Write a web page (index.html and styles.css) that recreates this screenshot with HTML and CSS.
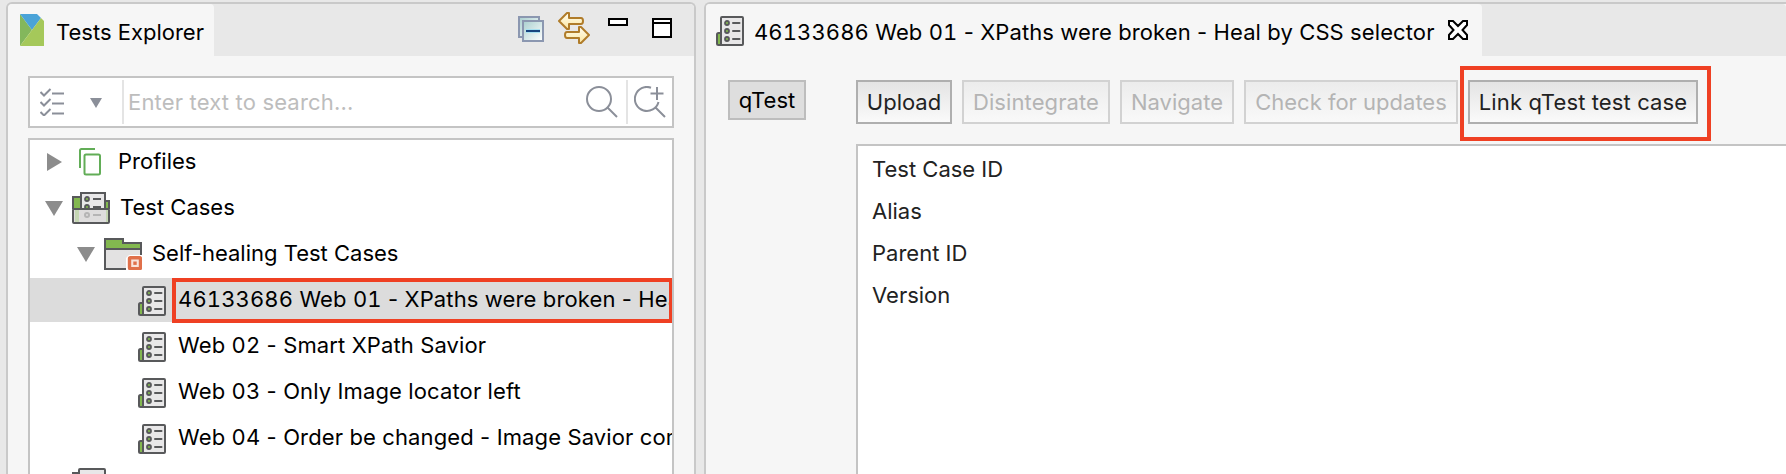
FILE: index.html
```
<!DOCTYPE html>
<html lang="en">
<head>
<meta charset="utf-8">
<title>Tests Explorer</title>
<link rel="stylesheet" href="styles.css">
</head>
<body>
<svg width="0" height="0" class="defs" aria-hidden="true">
  <defs>
    <linearGradient id="sheet" x1="0" y1="0" x2="1" y2="1"><stop offset="0" stop-color="#a9cfcf"/><stop offset="1" stop-color="#fff"/></linearGradient>
    <linearGradient id="gold" x1="0" y1="0" x2="0" y2="1"><stop offset="0" stop-color="#fffdf2"/><stop offset="1" stop-color="#fbe6a0"/></linearGradient>
    <symbol id="case" viewBox="0 0 28 30">
      <rect x="1" y="17" width="6" height="12" rx="1.5" fill="#83b84f" stroke="#58595b" stroke-width="2"/>
      <rect x="5" y="1" width="22" height="28" rx="1" fill="#e8e7e8" stroke="#58595b" stroke-width="2"/>
      <g fill="#83b84f" stroke="#58595b" stroke-width="1.8"><circle cx="11" cy="7" r="2"/><circle cx="11" cy="15" r="2"/><circle cx="11" cy="23" r="2"/></g>
      <path d="M17 7h6.5M17 15h6.5M17 23h6.5" stroke="#58595b" stroke-width="2" stroke-linecap="round"/>
    </symbol>
  </defs>
</svg>
<div class="workbench">
  <section class="view explorer">
    <header class="tabbar">
      <div class="tab explorer-tab">
        <svg class="logo" width="24" height="32" viewBox="0 0 24 32"><path d="M0 0L12 16L0 32z" fill="#83b75c"/><path d="M0 0H17L21 4L12 16z" fill="#4aa3d8"/><path d="M21 4L24 7V32H0z" fill="#a5c85a"/></svg>
        <span class="t">Tests Explorer</span>
      </div>
      <div class="tools">
        <svg width="26" height="26" viewBox="0 0 26 26"><rect x="1" y="1" width="20" height="20" fill="url(#sheet)" stroke="#8b97b0" stroke-width="2"/><rect x="5" y="5" width="20" height="20" fill="url(#sheet)" stroke="#8b97b0" stroke-width="2"/><path d="M8 15h14" stroke="#a8e0f0" stroke-width="4"/><path d="M8 15h14" stroke="#17457e" stroke-width="2"/></svg>
        <svg class="sync" width="32" height="32" viewBox="0 0 32 32"><g fill="url(#gold)" stroke="#b07c2a" stroke-width="2" stroke-linejoin="round"><path d="M1 9L9 1h2v5h12q2 0 2 3t-2 3H11v5H9z"/><path d="M31 23L23 15h-2v5H9q-2 0-2 3t2 3h12v5h2z"/></g></svg>
        <svg class="min" width="20" height="8" viewBox="0 0 20 8"><rect x="1" y="1" width="18" height="6" fill="#fff" stroke="#000" stroke-width="2"/></svg>
        <svg class="max" width="20" height="20" viewBox="0 0 20 20"><path d="M1 1h18v18H1zM1 5h18" fill="#fff" stroke="#000" stroke-width="2"/></svg>
      </div>
    </header>
    <div class="search">
      <svg class="checks" width="24" height="28" viewBox="0 0 24 28"><path d="M0.5 4l3.5 3.500L10.500 1M0.500 14l3.500 3.500L10.500 11M0.500 24l3.500 3.500L10.500 21M12 5.500h12M12 15.500h12M12 25.500h12" fill="none" stroke="#8b8f99" stroke-width="2"/></svg>
      <svg class="drop" width="12" height="10" viewBox="0 0 12 10"><path d="M0 0h12L6 10z" fill="#8b8f99"/></svg>
      <i class="rule"></i>
      <span class="placeholder t">Enter text to search...</span>
      <svg class="lens" width="32" height="32" viewBox="0 0 32 32"><g fill="none" stroke="#8b8f99" stroke-width="2"><circle cx="13" cy="13" r="12"/><path d="M21.500 21.500L31 31"/></g></svg>
      <i class="rule"></i>
      <svg class="lens-plus" width="32" height="32" viewBox="0 0 32 32"><g fill="none" stroke="#8b8f99" stroke-width="2"><path d="M17 1.700A12 12 0 1 0 24.500 16M21.500 21.500L31 31M23 1v13M16.500 7.500h13"/></g></svg>
    </div>
    <div class="tree">
      <div class="row profiles">
        <svg class="arrow" width="15" height="18" viewBox="0 0 15 18"><path d="M0 0L15 9L0 18z" fill="#8c8c8c"/></svg>
        <svg class="pages" width="22" height="28" viewBox="0 0 22 28"><path d="M1 20V2.500Q1 1 2.500 1H16" fill="none" stroke="#62ad57" stroke-width="2"/><rect x="5.500" y="6.500" width="15.500" height="20" rx="1.500" fill="#fff" stroke="#62ad57" stroke-width="2"/></svg>
        <span class="t">Profiles</span>
      </div>
      <div class="row cases">
        <svg class="arrow" width="18" height="15" viewBox="0 0 18 15"><path d="M0 0H18L9 15z" fill="#8c8c8c"/></svg>
        <svg class="box" width="38" height="32" viewBox="0 0 38 32"><path d="M1 17V5h8v12M37 17V9h-4v8" fill="#83b84f" stroke="#58595b" stroke-width="2"/><path d="M9 17V1h24v16" fill="#e8e7e8" stroke="#58595b" stroke-width="2"/><g fill="#83b84f" stroke="#58595b" stroke-width="1.800"><circle cx="15" cy="7" r="2"/><circle cx="15" cy="15" r="2"/></g><path d="M21 7h8M21 15h8" stroke="#58595b" stroke-width="2"/><rect x="1" y="17" width="36" height="14" rx="1" fill="#dedddd" stroke="#58595b" stroke-width="2"/><path d="M3 18h4v12H3zM34 18h2v12h-2z" fill="#c5d6b3"/><circle cx="15" cy="23" r="2" fill="none" stroke="#b5b5b5" stroke-width="2"/><path d="M21 23h8" stroke="#b5b5b5" stroke-width="2"/></svg>
        <span class="t">Test Cases</span>
      </div>
      <div class="row healing">
        <svg class="arrow" width="18" height="15" viewBox="0 0 18 15"><path d="M0 0H18L9 15z" fill="#8c8c8c"/></svg>
        <svg class="folder" width="38" height="32" viewBox="0 0 38 32"><path d="M1 11V1h18v4h18v6z" fill="#83b84f"/><path d="M1 11h36v20H1z" fill="#e3e2e2"/><path d="M1 31V1h18v4h18v26zM1 11h36" fill="none" stroke="#58595b" stroke-width="2"/><path d="M22 32V20l3-3h13v15z" fill="#fff"/><rect x="25.500" y="19.700" width="11" height="11" rx="1" fill="#f8e4dc" stroke="#e0704a" stroke-width="3.400"/><rect x="29.300" y="23.500" width="3.400" height="3.400" fill="#e0704a"/></svg>
        <span class="t">Self-healing Test Cases</span>
      </div>
      <div class="row leaf selected"><svg width="28" height="30"><use href="#case"/></svg><span class="t"><span class="num">46133686</span> Web <span class="num">01</span> - XPaths were broken - Heal by CSS selector</span></div>
      <div class="row leaf"><svg width="28" height="30"><use href="#case"/></svg><span class="t">Web <span class="num">02</span> - Smart XPath Savior</span></div>
      <div class="row leaf"><svg width="28" height="30"><use href="#case"/></svg><span class="t">Web <span class="num">03</span> - Only Image locator left</span></div>
      <div class="row leaf"><svg width="28" height="30"><use href="#case"/></svg><span class="t">Web <span class="num">04</span> - Order be changed - Image Savior combined</span></div>
      <div class="row partial"><svg width="36" height="30" viewBox="0 0 36 30"><path d="M1 30V5h6" fill="#83b84f" stroke="#58595b" stroke-width="2"/><rect x="7" y="1" width="26" height="28" rx="1" fill="#e8e7e8" stroke="#58595b" stroke-width="2"/></svg></div>
      <i class="mark mark-row"></i>
    </div>
  </section>
  <section class="view editor">
    <header class="tabbar">
      <div class="tab editor-tab">
        <svg width="28" height="30"><use href="#case"/></svg>
        <span class="t"><span class="num">46133686</span> Web <span class="num">01</span> - XPaths were broken - Heal by CSS selector</span>
        <svg class="close" width="20" height="20" viewBox="0 0 20 20"><path d="M1 1H5L10 6L15 1H19V5L14.500 10L19 15V19H15L10 14L5 19H1V15L5.500 10L1 5z" fill="#fff" stroke="#000" stroke-width="2"/></svg>
      </div>
    </header>
    <div class="content">
      <button class="side">qTest</button>
      <div class="main">
        <div class="buttons">
          <button class="btn b1">Upload</button>
          <button class="btn b2" disabled>Disintegrate</button>
          <button class="btn b3" disabled>Navigate</button>
          <button class="btn b4" disabled>Check for updates</button>
          <div class="linkwrap"><button class="btn b5">Link qTest test case</button><i class="mark mark-link"></i></div>
        </div>
        <div class="fields"><div>Test Case ID</div><div>Alias</div><div>Parent ID</div><div>Version</div></div>
      </div>
    </div>
  </section>
</div>
</body>
</html>
```
FILE: styles.css
```
* { box-sizing: border-box; }
body { margin: 0; width: 1786px; height: 474px; overflow: hidden; background: #e8e8e8; color: #000; font: 22px/44px Inter, "Liberation Sans", sans-serif; white-space: nowrap; }
.num { font-variant-numeric: tabular-nums; }
.defs { position: absolute; }
svg { display: block; flex: none; }
button { font: inherit; color: inherit; padding: 0; margin: 0; }
.workbench { display: flex; gap: 8px; height: 474px; padding: 2px 0 0 6px; }
.view { border: 2px solid #c9c9c9; border-bottom: 0; background: #f6f6f6; border-radius: 6px 6px 0 0; }
.explorer { flex: none; width: 690px; overflow: hidden; }
.editor { flex: 1; border-right: 0; border-top-right-radius: 0; min-width: 0; }
.tabbar { display: flex; justify-content: space-between; height: 52px; background: #e8e8e8; border-radius: 4px 4px 0 0; }
.tab { display: flex; align-items: flex-start; background: #f6f6f6; border-radius: 4px 4px 0 0; height: 52px; }
.tab .t { line-height: 56px; height: 52px; }
.explorer-tab { width: 206px; padding-left: 12px; gap: 12px; }
.explorer-tab .t { letter-spacing: 0; }
.logo { margin-top: 10px; }
.tools { display: flex; padding: 8px 22px 0 0; }
.tools svg:first-child { margin-top: 4px; }
.sync { margin-left: 14px; }
.min { margin: 6px 0 0 18px; }
.max { margin: 6px 0 0 24px; }
.search { display: flex; align-items: center; width: 646px; height: 52px; margin: 20px 0 0 20px; border: 2px solid #c4c4c4; background: #fff; padding-left: 10px; }
.checks { margin-top: -1px; }
.drop { margin: 1px 20px 0 26px; }
.rule { width: 2px; height: 44px; background: #e4e4e4; }
.placeholder { color: #bdbdbd; margin-left: 4px; width: 458px; letter-spacing: 0.17px; }
.lens { margin: 0 8px 0 0; }
.lens-plus { margin-left: 6px; }
.tree { position: relative; width: 646px; height: 340px; margin: 10px 0 0 20px; border: 2px solid #c4c4c4; border-bottom: 0; background: #fff; overflow: hidden; }
.row { display: flex; align-items: center; height: 44px; margin-bottom: 2px; }
.row .t { line-height: 42px; height: 44px; }
.profiles { padding-left: 17px; }
.pages { margin: 0 17px 0 17px; }
.cases { padding-left: 15px; }
.box { margin: 0 10px 0 9px; }
.healing { padding-left: 47px; }
.folder { margin: 0 10px 0 9px; }
.leaf { padding-left: 108px; gap: 12px; letter-spacing: 0.12px; }
.leaf svg { margin-top: 2px; }
.selected { background: #dcdcdc; }
.partial { padding-left: 42px; align-items: flex-start; padding-top: 6px; }
.mark { position: absolute; border: 4px solid #ef4023; }
.mark-row { left: 142px; top: 138px; width: 501px; height: 45px; }
.editor-tab { width: 776px; padding-left: 10px; letter-spacing: 0.1px; }
.editor-tab svg:first-child { margin: 12px 10px 0 0; }
.editor-tab .t { width: 694px; }
.close { margin-top: 16px; }
.content { display: flex; gap: 50px; padding: 24px 0 0 22px; }
.side { width: 78px; height: 40px; border: 2px solid #bdbdbd; background: #dedede; line-height: 36px; }
.main { flex: 1; }
.buttons { display: flex; gap: 10px; height: 44px; }
.btn { height: 44px; border: 2px solid #afafaf; background: linear-gradient(#e4e4e4, #fafafa); color: #222; line-height: 41px; }
.btn:disabled { border-color: #d2d2d2; background: linear-gradient(#ececec, #f9f9f9); color: #b4b4b4; }
.b1 { width: 96px; }
.b2 { width: 148px; letter-spacing: 0.1px; }
.b3 { width: 114px; }
.b4 { width: 214px; }
.b5 { width: 230px; letter-spacing: 0.12px; }
.linkwrap { position: relative; }
.mark-link { left: -8px; top: -14px; width: 251px; height: 75px; }
.fields { height: 330px; margin-top: 20px; border: 2px solid #c4c4c4; border-right: 0; border-bottom: 0; background: #fff; padding: 2px 0 0 14px; line-height: 42px; color: #222; }
```
